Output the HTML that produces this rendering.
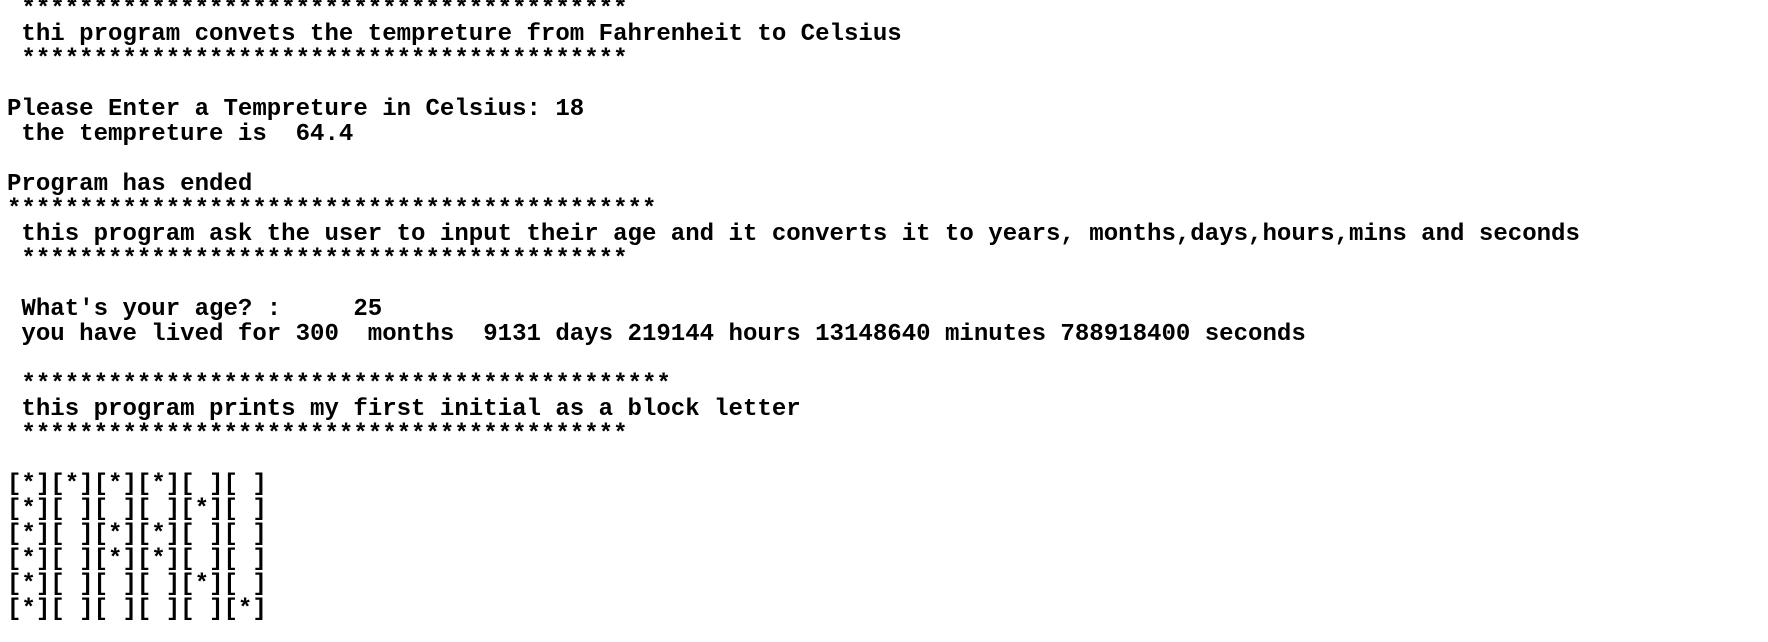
<!DOCTYPE html>
<html><head><style>
html,body{margin:0;padding:0;background:#fff;width:1768px;height:642px;overflow:hidden}
pre{margin:0;position:absolute;left:7px;top:-3px;font-family:"Liberation Mono",monospace;font-size:24.05px;line-height:25.02px;color:#000;font-weight:bold}
</style></head><body><pre> ******************************************
 thi program convets the tempreture from Fahrenheit to Celsius
 ******************************************

Please Enter a Tempreture in Celsius: 18
 the tempreture is  64.4

Program has ended
*********************************************
 this program ask the user to input their age and it converts it to years, months,days,hours,mins and seconds
 ******************************************

 What's your age? :     25
 you have lived for 300  months  9131 days 219144 hours 13148640 minutes 788918400 seconds

 *********************************************
 this program prints my first initial as a block letter
 ******************************************

[*][*][*][*][ ][ ]
[*][ ][ ][ ][*][ ]
[*][ ][*][*][ ][ ]
[*][ ][*][*][ ][ ]
[*][ ][ ][ ][*][ ]
[*][ ][ ][ ][ ][*]</pre></body></html>
